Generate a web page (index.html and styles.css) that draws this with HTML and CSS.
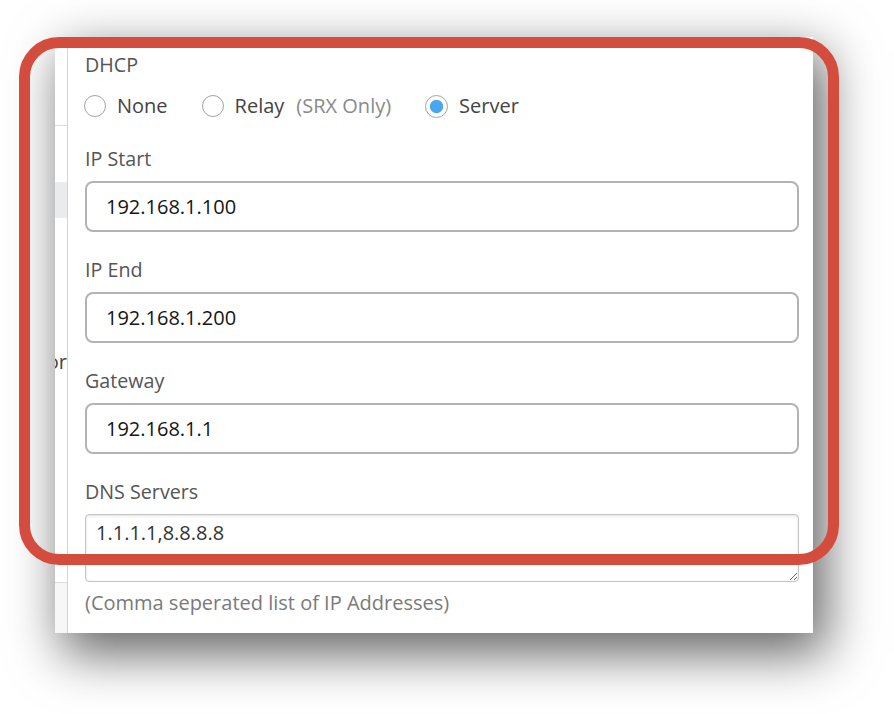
FILE: index.html
```html
<!DOCTYPE html>
<html lang="en">
<head>
<meta charset="utf-8">
<title>DHCP settings</title>
<link rel="stylesheet" href="styles.css">
</head>
<body>
<div class="stage">
  <div class="panel">
    <div class="strip">
      <div class="strip-top"></div>
      <div class="strip-line"></div>
      <div class="strip-gap1"></div>
      <div class="strip-sel"></div>
      <div class="strip-gap2"></div>
      <div class="strip-text"><span>Vendor</span></div>
      <div class="strip-gap3"></div>
      <div class="strip-line"></div>
      <div class="strip-bottom"></div>
    </div>
    <div class="divider"></div>
    <form class="form">
      <div class="label">DHCP</div>
      <div class="radios">
        <label class="radio"><input type="radio" name="dhcp"><span>None</span></label>
        <label class="radio"><input type="radio" name="dhcp"><span>Relay<span class="note">(SRX Only)</span></span></label>
        <label class="radio"><input type="radio" name="dhcp" checked><span>Server</span></label>
      </div>
      <div class="field first">
        <label class="label" for="ipstart">IP Start</label>
        <input class="text" id="ipstart" type="text" value="192.168.1.100">
      </div>
      <div class="field">
        <label class="label" for="ipend">IP End</label>
        <input class="text" id="ipend" type="text" value="192.168.1.200">
      </div>
      <div class="field">
        <label class="label" for="gw">Gateway</label>
        <input class="text" id="gw" type="text" value="192.168.1.1">
      </div>
      <div class="field">
        <label class="label" for="dns">DNS Servers</label>
        <textarea class="area" id="dns">1.1.1.1,8.8.8.8</textarea>
        <div class="help">(Comma seperated list of IP Addresses)</div>
      </div>
    </form>
  </div>
  <div class="highlight"></div>
</div>
</body>
</html>
```
FILE: styles.css
```css
html, body {
  margin: 0;
  padding: 0;
  background: #ffffff;
  font-family: "Open Sans", "Noto Sans", sans-serif;
}

.stage {
  position: relative;
  width: 894px;
  height: 714px;
  padding: 37px 0 0 55px;
  box-sizing: border-box;
  overflow: hidden;
}

.panel {
  width: 758px;
  height: 596px;
  background: #ffffff;
  display: grid;
  grid-template-columns: 12px 1px 1fr;
  box-shadow: 10px 18px 48px 3px rgba(0, 0, 0, 0.6);
}

.strip {
  display: flex;
  flex-direction: column;
  overflow: hidden;
  background: #ffffff;
}

.strip-top { height: 88px; }
.strip-line { height: 1px; background: #dcdcdc; }
.strip-gap1 { height: 56px; }
.strip-sel { height: 36px; background: #e9ebed; }
.strip-gap2 { height: 131px; }
.strip-text {
  height: 26px;
  display: flex;
  justify-content: flex-end;
  overflow: hidden;
  white-space: nowrap;
  font-size: 20px;
  line-height: 26px;
  color: #444;
}
.strip-gap3 { flex: 1; }
.strip-bottom { height: 50px; background: #f7f7f7; }

.divider { background: #d4d4d4; }

.form {
  margin: 0;
  padding: 15px 14px 0 17px;
  min-width: 0;
}

.label {
  display: block;
  font-size: 19.7px;
  line-height: 26px;
  color: #555555;
}

.radios {
  display: flex;
  align-items: center;
  gap: 34px;
  margin-top: 15px;
  height: 26px;
  margin-left: -1px;
}

.radio {
  display: flex;
  align-items: center;
  gap: 11px;
  font-size: 20px;
  line-height: 26px;
  color: #444444;
}

.radio input {
  appearance: none;
  -webkit-appearance: none;
  margin: 0;
  width: 22px;
  height: 22px;
  border: 1.5px solid #a3a3a3;
  border-radius: 50%;
  background: #ffffff;
  box-sizing: border-box;
}

.radio input:checked {
  width: 23px;
  height: 23px;
  background: radial-gradient(circle, #48a7ef 0, #48a7ef 6.2px, #ffffff 7px);
}

.note {
  margin-left: 12px;
  color: #8a8a8a;
}

.field { margin-top: 25px; }
.field.first { margin-top: 27px; }

.field .label { margin-bottom: 9px; }

.text {
  display: block;
  width: 100%;
  height: 51px;
  box-sizing: border-box;
  border: 2px solid #b3b3b3;
  border-radius: 8px;
  padding: 0 19px;
  font-family: "Open Sans", "Noto Sans", sans-serif;
  font-size: 20px;
  color: #151515;
  background: #ffffff;
  outline: none;
}

.area {
  display: block;
  width: 100%;
  height: 68px;
  box-sizing: border-box;
  border: 1px solid #c4c4c4;
  border-radius: 4px;
  padding: 5px 10px;
  font-family: "Open Sans", "Noto Sans", sans-serif;
  font-size: 20px;
  line-height: 26px;
  color: #333333;
  background: #ffffff;
  box-shadow: inset 0 1px 3px rgba(0, 0, 0, 0.12);
  resize: vertical;
  outline: none;
}

.help {
  margin-top: 8px;
  font-size: 20px;
  line-height: 26px;
  color: #7a7a7a;
}

.highlight {
  position: absolute;
  left: 19px;
  top: 37px;
  width: 820px;
  height: 528px;
  box-sizing: border-box;
  border: 11px solid #d44c3d;
  border-radius: 40px;
  pointer-events: none;
}
```
